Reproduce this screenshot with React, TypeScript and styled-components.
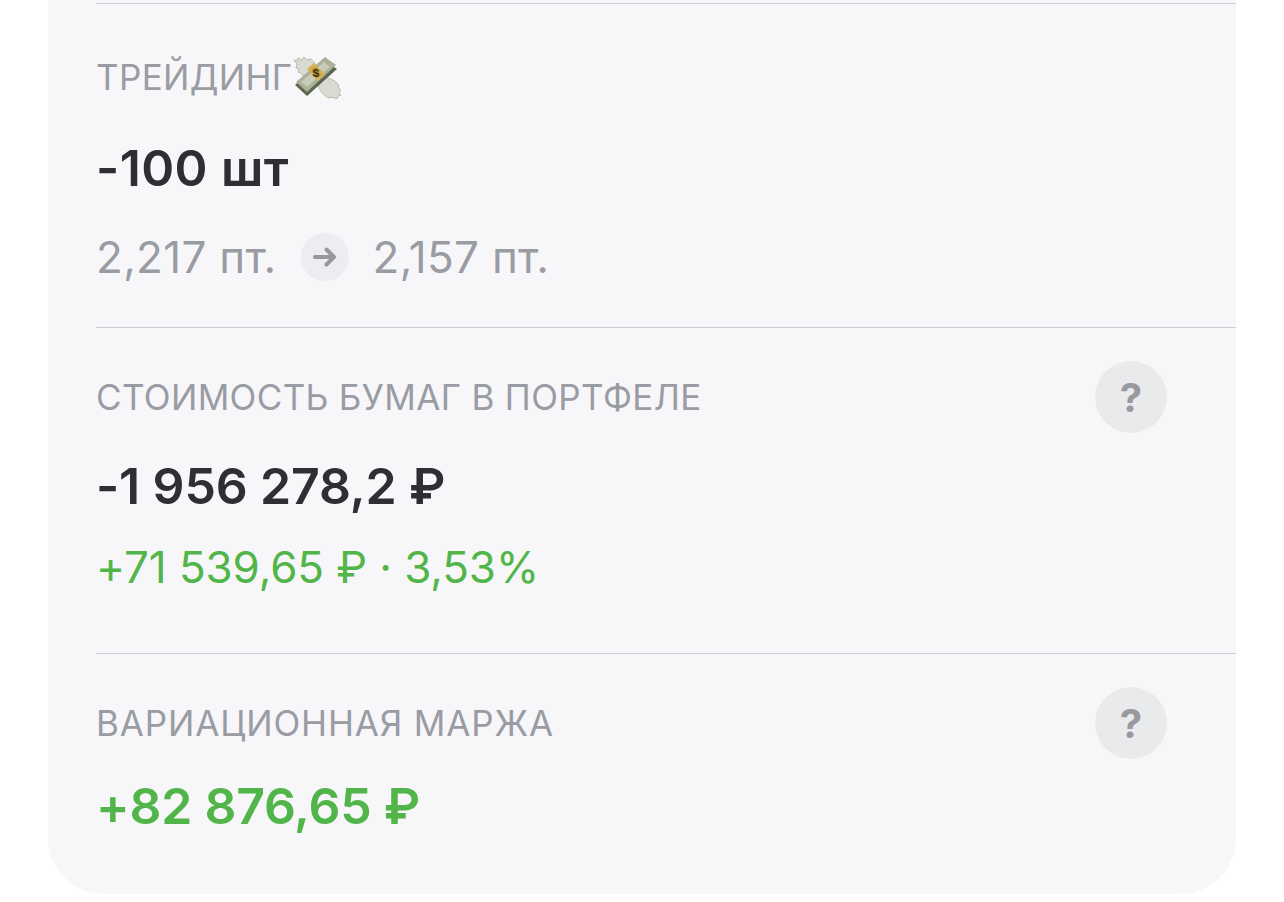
import React from "react";
import styled, { createGlobalStyle } from "styled-components";

const Global = createGlobalStyle`
  html, body { margin: 0; padding: 0; background: #fff; }
  body { font-family: Inter, "Noto Sans", "Liberation Sans", sans-serif; }
`;

const Page = styled.div`
  width: 1284px;
  height: 902px;
  overflow: hidden;
  box-sizing: border-box;
  padding: 0 48px 8px;
`;

const Card = styled.main`
  height: 894px;
  box-sizing: border-box;
  padding: 3px 0 0 48px;
  background: #f7f7fa;
  border-radius: 0 0 56px 56px;
`;

const Section = styled.section<{ $height: number; $top: number }>`
  height: ${(p) => p.$height}px;
  box-sizing: border-box;
  border-top: 1px solid #cccdd0;
  padding: ${(p) => p.$top}px 69px 0 0;
`;

const Head = styled.div`
  display: flex;
  align-items: center;
  justify-content: space-between;
  height: 72px;
`;

const Label = styled.h3<{ $spacing?: number }>`
  display: flex;
  align-items: center;
  margin: 0;
  font-size: 35px;
  font-weight: 400;
  line-height: 42px;
  letter-spacing: ${(p) => p.$spacing ?? 0.35}px;
  color: #9a9ca3;
  text-transform: uppercase;
`;

const Help = styled.span`
  display: flex;
  align-items: center;
  justify-content: center;
  width: 72px;
  height: 72px;
  border-radius: 50%;
  background: #e9eaec;
  color: #98999e;
  font-size: 40px;
  font-weight: 700;
`;

const Value = styled.div<{ $green?: boolean; $top: number; $spacing?: number }>`
  margin-top: ${(p) => p.$top}px;
  font-size: 50px;
  font-weight: 600;
  line-height: 58px;
  letter-spacing: ${(p) => p.$spacing ?? 0}px;
  color: ${(p) => (p.$green ? "#52b549" : "#2e2f32")};
`;

const Sub = styled.div<{ $green?: boolean; $top: number; $spacing?: number }>`
  display: flex;
  align-items: center;
  margin-top: ${(p) => p.$top}px;
  font-size: 44px;
  font-weight: 400;
  line-height: 48px;
  letter-spacing: ${(p) => p.$spacing ?? -0.1}px;
  color: ${(p) => (p.$green ? "#52b549" : "#9a9ca3")};
`;

const ArrowDot = styled.span`
  display: flex;
  align-items: center;
  justify-content: center;
  width: 48px;
  height: 48px;
  margin: 0 24px 0 24px;
  border-radius: 50%;
  background: #ecedf0;
`;

const Emoji = styled.svg`
  display: block;
  margin: 0 0 0 2px;
  flex: none;
`;

const MoneyWings = () => (
  <Emoji width="48" height="44" viewBox="0 0 48 44" aria-label="money with wings">
    <path d="M0 5 L3 6 L4 3 L8 5 L10 2 L13 5 L17 4 C21 7 23 11 23 16 L15 24 C11 23 8 21 7 18 L4 17 L5 14 L2 13 L3 9 Z" fill="#d9dbd2" stroke="#b3b6a8" strokeWidth="0.9" strokeLinejoin="round" />
    <path d="M24 31 L31 23 C36 23 40 25 43 28 L45 31 L44 33 L47 35 L45 38 L47 40 L44 41 L43 44 L38 42 L35 43 C30 41 26 36 24 31Z" fill="#d9dbd2" stroke="#b3b6a8" strokeWidth="0.9" strokeLinejoin="round" />
    <path d="M1 30 L31 6 L43 14 L13 41Z" fill="#5c6650" />
    <path d="M2 27 L31 2 L42 10 L13 37Z" fill="#a9b298" />
    <path d="M7 27 L30 7 L36 12 L13 32Z" fill="#c6ccb7" />
    <path d="M13 14 L20 8 L31 19 L24 26Z" fill="#d8b052" />
    <path d="M17 15 L20.5 12 L27.5 19.5 L24 22.5Z" fill="#c49a3e" />
    <text x="22" y="21.5" fontFamily="Inter, sans-serif" fontWeight="800" fontSize="11" fill="#4a3a18" textAnchor="middle">$</text>
  </Emoji>
);

const Arrow = () => (
  <svg width="26" height="22" viewBox="0 0 26 22" fill="none" stroke="#97989e" strokeWidth="4" strokeLinecap="round" strokeLinejoin="round">
    <path d="M3 11 H22 M14.5 3.5 L22 11 L14.5 18.5" />
  </svg>
);

export default function App() {
  return (
    <>
      <Global />
      <Page>
        <Card>
          <Section $height={324} $top={51}>
            <Label>Трейдинг<MoneyWings /></Label>
            <Value $top={40} $spacing={0.4}>-100 шт</Value>
            <Sub $top={36} $spacing={0.3}>
              2,217 пт.
              <ArrowDot><Arrow /></ArrowDot>
              2,157 пт.
            </Sub>
          </Section>
          <Section $height={326} $top={33}>
            <Head>
              <Label>Стоимость бумаг в портфеле</Label>
              <Help>?</Help>
            </Head>
            <Value $top={24} $spacing={-0.15}>-1 956 278,2 ₽</Value>
            <Sub $top={28}  $green>+71 539,65 ₽ · 3,53%</Sub>
          </Section>
          <Section $height={241} $top={33}>
            <Head>
              <Label $spacing={0.85}>Вариационная маржа</Label>
              <Help>?</Help>
            </Head>
            <Value $top={18} $spacing={-0.25} $green>+82 876,65 ₽</Value>
          </Section>
        </Card>
      </Page>
    </>
  );
}
